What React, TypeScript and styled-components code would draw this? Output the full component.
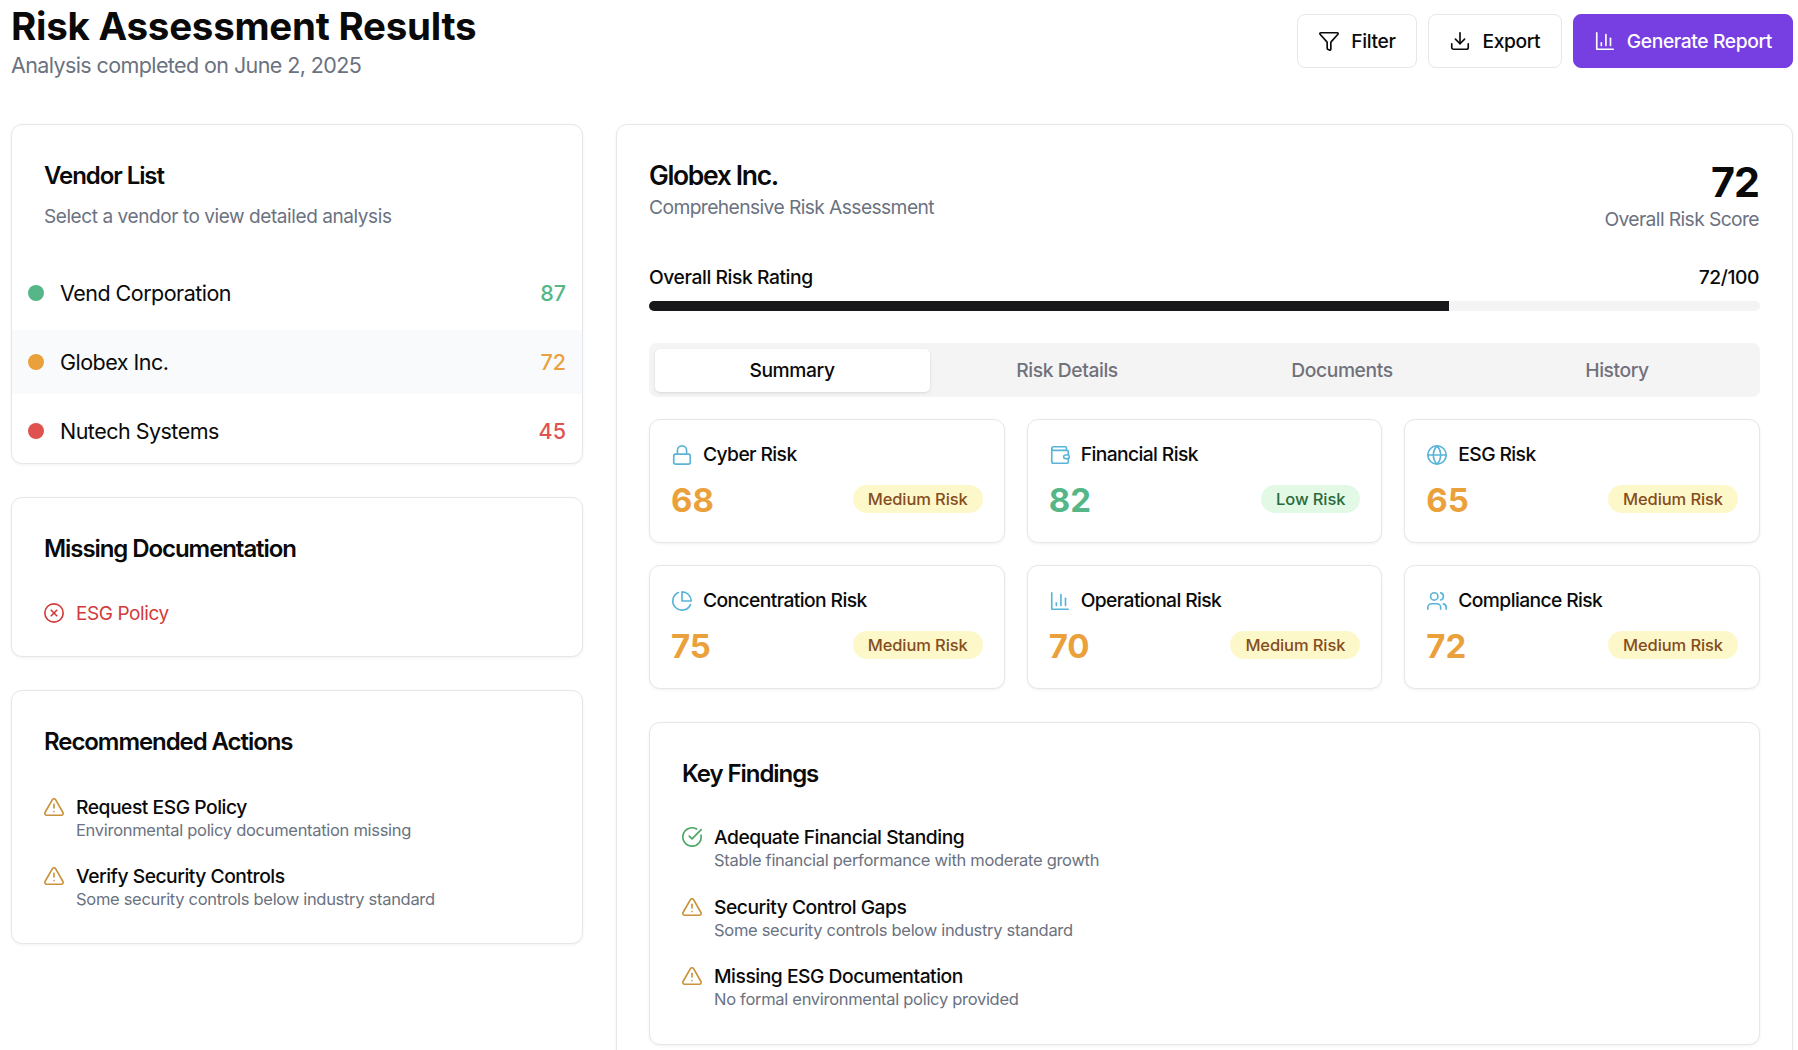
import React from 'react';
import styled, { createGlobalStyle } from 'styled-components';
import {
  Filter,
  Download,
  Lock,
  Wallet,
  Globe,
  Users,
  CircleX,
  TriangleAlert,
  CircleCheckBig,
} from 'lucide-react';

const GlobalStyle = createGlobalStyle`
  html, body {
    margin: 0;
    padding: 0;
    background: #ffffff;
    font-family: Inter, "Liberation Sans", sans-serif;
    color: #0a0a0a;
  }
  html::-webkit-scrollbar { display: none; }
  * { box-sizing: border-box; }
`;

const scoreColors = { good: '#55b787', warn: '#eba13b', bad: '#e0524f' };
type Level = keyof typeof scoreColors;

type IconProps = { size?: number; strokeWidth?: number };

function BarsIcon({ size = 22, strokeWidth = 2 }: IconProps) {
  return (
    <svg width={size} height={size} viewBox="0 0 24 24" fill="none" stroke="currentColor" strokeWidth={strokeWidth} strokeLinecap="round" strokeLinejoin="round">
      <path d="M3 3v18h18" />
      <path d="M18 17V9" />
      <path d="M13 17V5" />
      <path d="M8 17v-3" />
    </svg>
  );
}

function PieIcon({ size = 22, strokeWidth = 2 }: IconProps) {
  return (
    <svg width={size} height={size} viewBox="0 0 24 24" fill="none" stroke="currentColor" strokeWidth={strokeWidth} strokeLinecap="round" strokeLinejoin="round">
      <path d="M21.21 15.89A10 10 0 1 1 8 2.83" />
      <path d="M22 12A10 10 0 0 0 12 2v10z" />
    </svg>
  );
}

const Page = styled.div`
  padding: 0 5px 0 11px;
  height: 1050px;
  overflow: hidden;
`;

const Header = styled.header`
  display: flex;
  justify-content: space-between;
  align-items: flex-start;
  height: 124px;
`;

const Title = styled.h1`
  margin: 0;
  font-size: 38.5px;
  line-height: 52px;
  font-weight: 700;
  letter-spacing: -0.25px;
`;

const Subtitle = styled.p`
  margin: 0;
  font-size: 21.5px;
  line-height: 26px;
  letter-spacing: -0.6px;
  color: #6b7280;
`;

const Actions = styled.div`
  display: flex;
  gap: 11px;
  padding-top: 14px;
`;

const ActionButton = styled.button<{ $primary?: boolean }>`
  display: flex;
  align-items: center;
  gap: 11px;
  height: 54px;
  padding: 0 ${(p) => (p.$primary ? '20px' : '20.5px')};
  font: 500 19.25px Inter, sans-serif;
  letter-spacing: -0.39px;
  border-radius: 8px;
  border: 1px solid ${(p) => (p.$primary ? '#773ee2' : '#e5e7eb')};
  background: ${(p) => (p.$primary ? '#773ee2' : '#ffffff')};
  color: ${(p) => (p.$primary ? '#ffffff' : '#0a0a0a')};
`;

const Layout = styled.div`
  display: grid;
  grid-template-columns: repeat(3, 1fr);
  gap: 33px;
  align-items: start;
`;

const Sidebar = styled.aside`
  display: flex;
  flex-direction: column;
  gap: 33px;
`;

const Card = styled.section`
  background: #ffffff;
  border: 1px solid #e5e7eb;
  border-radius: 11px;
  box-shadow: 0 1px 3px rgba(0, 0, 0, 0.06);
`;

const CardHead = styled.div<{ $tight?: boolean }>`
  padding: 34px 32px ${(p) => (p.$tight ? '31.5px' : '36.5px')};
`;

const CardTitle = styled.h2`
  margin: 0;
  font-size: 24px;
  line-height: 33px;
  font-weight: 600;
  letter-spacing: -1.07px;
`;

const CardHint = styled.p`
  margin: 10.5px 0 0;
  font-size: 19px;
  line-height: 27px;
  letter-spacing: -0.42px;
  color: #6b7280;
`;

const VendorList = styled.div`
  display: flex;
  flex-direction: column;
  gap: 5px;
`;

const VendorRow = styled.div<{ $selected?: boolean }>`
  display: flex;
  align-items: center;
  gap: 16px;
  height: 64px;
  padding: 0 16px;
  font-size: 21.5px;
  background: ${(p) => (p.$selected ? '#f9fafb' : 'transparent')};
`;

const Dot = styled.span<{ $level: Level }>`
  width: 16px;
  height: 16px;
  border-radius: 50%;
  background: ${(p) => scoreColors[p.$level]};
`;

const VendorName = styled.span`
  flex: 1;
  letter-spacing: -0.52px;
`;

const VendorScore = styled.span<{ $level: Level }>`
  font-weight: 500;
  color: ${(p) => scoreColors[p.$level]};
`;

const CardBody = styled.div`
  display: flex;
  flex-direction: column;
  gap: 22.5px;
  padding: 0 32px 31.5px;
`;

const MissingItem = styled.div`
  display: flex;
  align-items: center;
  gap: 11px;
  font-size: 19px;
  letter-spacing: -0.42px;
  color: #d23b3b;

  svg { margin-left: -1px; }
`;

const Notice = styled.div`
  display: flex;
  align-items: flex-start;
  gap: 11px;
`;

const NoticeIcon = styled.span<{ $color: string }>`
  display: flex;
  margin-left: -1px;
  padding-top: 1px;
  color: ${(p) => p.$color};
`;

const NoticeTitle = styled.div`
  font-size: 19.25px;
  line-height: 24px;
  font-weight: 500;
  letter-spacing: -0.47px;
`;

const NoticeText = styled.div`
  font-size: 16.5px;
  line-height: 23px;
  letter-spacing: -0.3px;
  color: #6b7280;
`;

const Main = styled(Card)`
  grid-column: span 2;
  padding: 33px 32px;
`;

const MainHead = styled.div`
  display: flex;
  justify-content: space-between;
  align-items: flex-start;
  padding-right: 1px;
`;

const VendorTitle = styled.h2`
  margin: 1px 0 2px;
  font-size: 26.5px;
  line-height: 33px;
  font-weight: 600;
  letter-spacing: -1.35px;
`;

const ScoreBlock = styled.div`
  text-align: right;
`;

const BigScore = styled.div`
  font-size: 41.25px;
  line-height: 48px;
  font-weight: 700;
  letter-spacing: -1px;
`;

const MutedLine = styled.div`
  font-size: 19.25px;
  line-height: 27px;
  letter-spacing: -0.6px;
  color: #6b7280;
`;

const RatingRow = styled.div`
  display: flex;
  justify-content: space-between;
  margin-top: 31px;
  padding-right: 1px;
  font-size: 19.25px;
  line-height: 27px;
  font-weight: 500;
  letter-spacing: -0.42px;
`;

const Track = styled.div`
  height: 10px;
  margin-top: 10px;
  border-radius: 6px;
  background: #f4f4f5;
  overflow: hidden;
`;

const Fill = styled.div`
  height: 100%;
  background: #18181b;
`;

const Tabs = styled.div`
  display: grid;
  grid-template-columns: repeat(4, 1fr);
  height: 54px;
  margin-top: 32px;
  padding: 5.5px;
  border-radius: 8px;
  background: #f4f4f5;
`;

const Tab = styled.div<{ $active?: boolean }>`
  display: flex;
  align-items: center;
  justify-content: center;
  border-radius: 5px;
  font-size: 19.25px;
  font-weight: 500;
  letter-spacing: -0.4px;
  color: ${(p) => (p.$active ? '#0a0a0a' : '#71717a')};
  background: ${(p) => (p.$active ? '#ffffff' : 'transparent')};
  box-shadow: ${(p) => (p.$active ? '0 1px 3px rgba(0,0,0,.12)' : 'none')};
`;

const RiskGrid = styled.div`
  display: grid;
  grid-template-columns: repeat(3, 1fr);
  gap: 22px;
  margin-top: 22px;
`;

const RiskCard = styled(Card)`
  height: 124px;
  padding: 21px;
`;

const RiskHead = styled.div`
  display: flex;
  align-items: center;
  gap: 10px;
  font-size: 19.25px;
  line-height: 27px;
  font-weight: 500;
  letter-spacing: -0.6px;
  color: #0a0a0a;

  svg { color: #5ab4d8; }
`;

const RiskFoot = styled.div`
  display: flex;
  justify-content: space-between;
  align-items: center;
  margin-top: 10px;
`;

const RiskScore = styled.span<{ $level: Level }>`
  font-size: 33px;
  line-height: 44px;
  font-weight: 700;
  color: ${(p) => scoreColors[p.$level]};
`;

const Badge = styled.span<{ $low?: boolean }>`
  margin-bottom: 2px;
  padding: 0 15px;
  height: 28px;
  line-height: 28px;
  border-radius: 14px;
  font-size: 16.5px;
  font-weight: 500;
  letter-spacing: -0.1px;
  color: ${(p) => (p.$low ? '#2b6a3d' : '#854d1e')};
  background: ${(p) => (p.$low ? '#e2f9e6' : '#fdf8c9')};
`;

const Findings = styled(Card)`
  margin-top: 33px;
  padding: 34px 32px 33px;
`;

const FindingList = styled.div`
  display: flex;
  flex-direction: column;
  gap: 22.5px;
  margin-top: 35px;
`;

const warnColor = '#c9923a';
const stroke = 1.8;

const vendors: { name: string; score: number; level: Level; selected?: boolean }[] = [
  { name: 'Vend Corporation', score: 87, level: 'good' },
  { name: 'Globex Inc.', score: 72, level: 'warn', selected: true },
  { name: 'Nutech Systems', score: 45, level: 'bad' },
];

const risks: { name: string; score: number; Icon: React.ComponentType<IconProps>; low?: boolean }[] = [
  { name: 'Cyber Risk', score: 68, Icon: Lock },
  { name: 'Financial Risk', score: 82, Icon: Wallet, low: true },
  { name: 'ESG Risk', score: 65, Icon: Globe },
  { name: 'Concentration Risk', score: 75, Icon: PieIcon },
  { name: 'Operational Risk', score: 70, Icon: BarsIcon },
  { name: 'Compliance Risk', score: 72, Icon: Users },
];

const actions = [
  { title: 'Request ESG Policy', text: 'Environmental policy documentation missing' },
  { title: 'Verify Security Controls', text: 'Some security controls below industry standard' },
];

const findings = [
  { title: 'Adequate Financial Standing', text: 'Stable financial performance with moderate growth', ok: true },
  { title: 'Security Control Gaps', text: 'Some security controls below industry standard' },
  { title: 'Missing ESG Documentation', text: 'No formal environmental policy provided' },
];

export default function App() {
  return (
    <Page>
      <GlobalStyle />
      <Header>
        <div>
          <Title>Risk Assessment Results</Title>
          <Subtitle>Analysis completed on June 2, 2025</Subtitle>
        </div>
        <Actions>
          <ActionButton><Filter size={22} strokeWidth={stroke} />Filter</ActionButton>
          <ActionButton><Download size={22} strokeWidth={stroke} />Export</ActionButton>
          <ActionButton $primary><BarsIcon size={22} strokeWidth={stroke} />Generate Report</ActionButton>
        </Actions>
      </Header>
      <Layout>
        <Sidebar>
          <Card>
            <CardHead $tight>
              <CardTitle>Vendor List</CardTitle>
              <CardHint>Select a vendor to view detailed analysis</CardHint>
            </CardHead>
            <VendorList>
              {vendors.map((v) => (
                <VendorRow key={v.name} $selected={v.selected}>
                  <Dot $level={v.level} />
                  <VendorName>{v.name}</VendorName>
                  <VendorScore $level={v.level}>{v.score}</VendorScore>
                </VendorRow>
              ))}
            </VendorList>
          </Card>
          <Card>
            <CardHead><CardTitle>Missing Documentation</CardTitle></CardHead>
            <CardBody>
              <MissingItem><CircleX size={22} strokeWidth={stroke} />ESG Policy</MissingItem>
            </CardBody>
          </Card>
          <Card>
            <CardHead><CardTitle>Recommended Actions</CardTitle></CardHead>
            <CardBody>
              {actions.map((a) => (
                <Notice key={a.title}>
                  <NoticeIcon $color={warnColor}><TriangleAlert size={22} strokeWidth={stroke} /></NoticeIcon>
                  <div>
                    <NoticeTitle>{a.title}</NoticeTitle>
                    <NoticeText>{a.text}</NoticeText>
                  </div>
                </Notice>
              ))}
            </CardBody>
          </Card>
        </Sidebar>
        <Main>
          <MainHead>
            <div>
              <VendorTitle>Globex Inc.</VendorTitle>
              <MutedLine>Comprehensive Risk Assessment</MutedLine>
            </div>
            <ScoreBlock>
              <BigScore>72</BigScore>
              <MutedLine>Overall Risk Score</MutedLine>
            </ScoreBlock>
          </MainHead>
          <RatingRow><span>Overall Risk Rating</span><span>72/100</span></RatingRow>
          <Track><Fill style={{ width: '72%' }} /></Track>
          <Tabs>
            <Tab $active>Summary</Tab>
            <Tab>Risk Details</Tab>
            <Tab>Documents</Tab>
            <Tab>History</Tab>
          </Tabs>
          <RiskGrid>
            {risks.map(({ name, score, Icon, low }) => (
              <RiskCard key={name}>
                <RiskHead><Icon size={22} strokeWidth={stroke} />{name}</RiskHead>
                <RiskFoot>
                  <RiskScore $level={low ? 'good' : 'warn'}>{score}</RiskScore>
                  <Badge $low={low}>{low ? 'Low Risk' : 'Medium Risk'}</Badge>
                </RiskFoot>
              </RiskCard>
            ))}
          </RiskGrid>
          <Findings>
            <CardTitle>Key Findings</CardTitle>
            <FindingList>
              {findings.map((f) => (
                <Notice key={f.title}>
                  <NoticeIcon $color={f.ok ? '#4aa564' : warnColor}>
                    {f.ok ? <CircleCheckBig size={22} strokeWidth={stroke} /> : <TriangleAlert size={22} strokeWidth={stroke} />}
                  </NoticeIcon>
                  <div>
                    <NoticeTitle>{f.title}</NoticeTitle>
                    <NoticeText>{f.text}</NoticeText>
                  </div>
                </Notice>
              ))}
            </FindingList>
          </Findings>
        </Main>
      </Layout>
    </Page>
  );
}
